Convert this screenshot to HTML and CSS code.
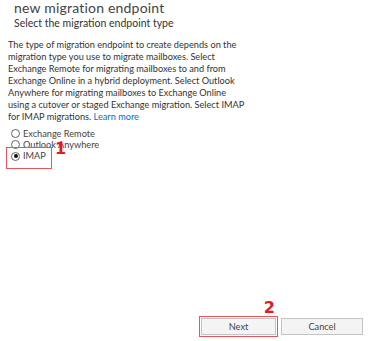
FILE: index.html
```html
<!DOCTYPE html>
<html>
<head>
<meta charset="utf-8">
<link rel="stylesheet" href="styles.css">
</head>
<body>
<div class="page">
  <div class="header">
    <div class="title">new migration endpoint</div>
    <div class="subtitle">Select the migration endpoint type</div>
  </div>
  <p class="desc">The type of migration endpoint to create depends on the<br>migration type you use to migrate mailboxes. Select<br>Exchange Remote for migrating mailboxes to and from<br>Exchange Online in a hybrid deployment. Select Outlook<br>Anywhere for migrating mailboxes to Exchange Online<br>using a cutover or staged Exchange migration. Select IMAP<br>for IMAP migrations. <a class="link" href="#">Learn more</a></p>
  <div class="options">
    <label class="opt"><span class="radio"></span>Exchange Remote</label>
    <label class="opt"><span class="radio"></span>Outlook Anywhere</label>
    <div class="imap-row">
      <div class="hl"><label class="opt"><span class="radio on"></span>IMAP</label></div>
      <span class="num n1">1</span>
    </div>
  </div>
  <div class="footer">
    <div class="next-wrap">
      <span class="num n2">2</span>
      <div class="hl-btn"><button class="btn">Next</button></div>
    </div>
    <button class="btn cancel">Cancel</button>
  </div>
</div>
</body>
</html>
```
FILE: styles.css
```css
html, body { margin: 0; padding: 0; background: #fff; }
.page {
  width: 369px; height: 341px; box-sizing: border-box;
  display: flex; flex-direction: column;
  font-family: "Lato", "Open Sans", sans-serif;
  color: #444;
  padding: 0 6px 4px 8px;
}
.header { padding-left: 6px; }
.title { font-size: 14px; line-height: 15px; margin-top: 0; color: #444; font-weight: 400; letter-spacing: 0.2px; }
.subtitle { font-size: 10.5px; line-height: 14px; margin-top: 1px; color: #333; }
.desc { margin: 9px 0 0; font-size: 9.2px; line-height: 12px; white-space: nowrap; color: #333; }
.link { color: #0072c6; text-decoration: none; }
.options { margin-top: 5px; display: flex; flex-direction: column; }
.opt { display: flex; align-items: center; font-size: 9.2px; line-height: 11px; height: 11px; color: #444; gap: 3px; }
.radio { width: 7px; height: 7px; border: 1px solid #666; border-radius: 50%; box-sizing: content-box; display: inline-flex; align-items: center; justify-content: center; background: #fff; margin-left: 3px; flex: none; }
.radio.on::after { content: ""; width: 4px; height: 4px; border-radius: 50%; background: #111; }
.imap-row { display: flex; align-items: flex-start; margin-top: -3px; }
.hl { border: 1px solid #e8545a; width: 46px; height: 22px; box-sizing: border-box; margin-left: -2px; padding-top: 3px; }
.hl .opt { margin-left: 1px; height: 10px; line-height: 10px; }
.num { color: #e21b1b; font-weight: 700; font-family: "DejaVu Sans", sans-serif; font-size: 16px; line-height: 16px; }
.n1 { margin-left: 3px; margin-top: -6px; }
.footer { margin-top: auto; display: flex; justify-content: flex-end; align-items: flex-end; gap: 3px; }
.next-wrap { display: flex; flex-direction: column; align-items: flex-end; }
.n2 { margin-right: 3px; }
.hl-btn { border: 1px solid #e8545a; padding: 1px; }
.btn { width: 75px; height: 17px; border: 1px solid #c4c4c4; background: #f4f4f4; color: #444; font-family: "Lato", "Open Sans", sans-serif; font-size: 9.2px; padding: 0; display: block; }
.btn.cancel { width: 82px; margin-bottom: 2px; }
```
